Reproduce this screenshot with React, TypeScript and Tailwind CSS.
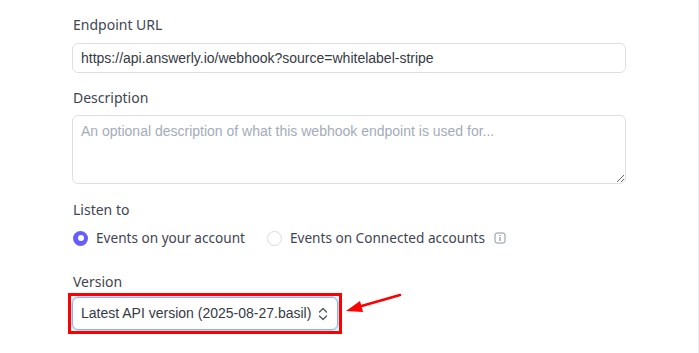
import React from "react";

const label = "text-[14px] leading-5 text-[#414552] font-['Noto_Sans',sans-serif]";
const option = "text-[13.6px] leading-5 text-[#414552] font-['Noto_Sans',sans-serif]";

export default function App() {
  return (
    <div className="w-[699px] h-[353px] bg-white border-r border-[#ebeef1] relative overflow-hidden">
      <div className="pl-[73px] pt-[15px] w-[626px]">
        {/* Endpoint URL */}
        <div className={label}>Endpoint URL</div>
        <input
          readOnly
          value="https://api.answerly.io/webhook?source=whitelabel-stripe"
          className="mt-2 -ml-px w-[554px] h-[30px] px-2 rounded-md border border-[#dcdfe4] text-[14px] text-[#353a44] font-['Liberation_Sans',sans-serif] outline-none"
        />

        {/* Description */}
        <div className={`${label} mt-[15px]`}>Description</div>
        <textarea
          placeholder="An optional description of what this webhook endpoint is used for..."
          className="mt-[7px] -ml-px block w-[554px] h-[69px] px-2 py-[5px] rounded-md border border-[#dcdfe4] text-[14px] leading-5 text-[#353a44] placeholder:text-[#a3acba] font-['Liberation_Sans',sans-serif] outline-none"
        />

        {/* Listen to */}
        <div className={`${label} mt-4`}>Listen to</div>
        <div className="mt-2 flex items-center h-5">
          <label className="flex items-center gap-2">
            <span className="w-[15px] h-[15px] rounded-full bg-[#675dff] flex items-center justify-center">
              <span className="w-[6px] h-[6px] rounded-full bg-white" />
            </span>
            <span className={option}>Events on your account</span>
          </label>
          <label className="flex items-center gap-2 ml-[22px]">
            <span className="w-[15px] h-[15px] rounded-full border border-[#d5dbe1] bg-white" />
            <span className={option}>Events on Connected accounts</span>
            <svg width="12" height="12" viewBox="0 0 12 12" className="ml-px">
              <rect x="1" y="1" width="10" height="10" rx="2" fill="none" stroke="#8a919c" strokeWidth="1" />
              <rect x="5.4" y="5" width="1.2" height="4" fill="#8a919c" />
              <rect x="5.4" y="3" width="1.2" height="1.2" fill="#8a919c" />
            </svg>
          </label>
        </div>

        {/* Version */}
        <div className={`${label} mt-6`}>Version</div>
        <div className="mt-px -ml-[5px] w-[274px] h-[41px] border-[3px] border-[#ff0000] p-[1px]">
          <div className="h-full rounded-md border border-[#7db9ee] shadow-[0_0_0_1px_#b9dcf9] flex items-center justify-between pl-[8px] pr-[9px]">
            <span className="text-[14px] text-[#353a44] font-['Liberation_Sans',sans-serif]">
              Latest API version (2025-08-27.basil)
            </span>
            <svg width="10" height="14" viewBox="0 0 10 14" fill="none" stroke="#545969" strokeWidth="1.4" strokeLinecap="round" strokeLinejoin="round">
              <path d="M1.5 5 L5 1.5 L8.5 5" />
              <path d="M1.5 9 L5 12.5 L8.5 9" />
            </svg>
          </div>
        </div>
      </div>

      {/* annotation arrow */}
      <svg className="absolute left-[340px] top-[286px]" width="70" height="34" viewBox="0 0 70 34">
        <line x1="60" y1="9" x2="18" y2="21" stroke="#ff0000" strokeWidth="2.5" strokeLinecap="round" />
        <polygon points="6,25 20,15 23,26" fill="#ff0000" />
      </svg>
    </div>
  );
}
